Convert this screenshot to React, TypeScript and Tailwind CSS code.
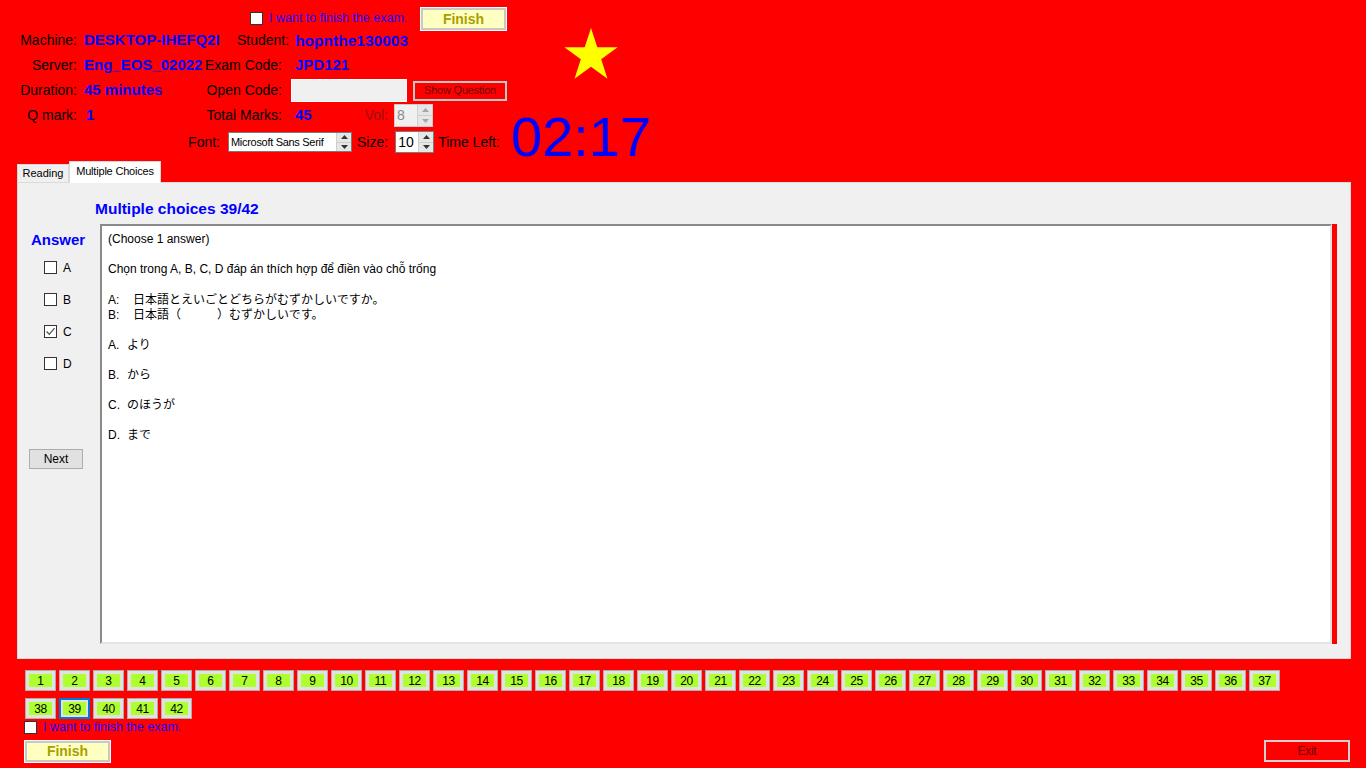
import React from 'react'

const nums = Array.from({ length: 42 }, (_, i) => i + 1)

function Arrows({ disabled }: { disabled?: boolean }) {
  const c = disabled ? '#a6a6a6' : '#333'
  return (
    <div className="flex flex-col w-[15px] h-full border-l border-[#cfcfcf]">
      <div className="flex-1 flex items-center justify-center bg-[#e6e6e6] border-b border-[#cfcfcf]">
        <svg width="7" height="4" viewBox="0 0 7 4"><path d="M0 4 L3.5 0 L7 4 Z" fill={c} /></svg>
      </div>
      <div className="flex-1 flex items-center justify-center bg-[#e6e6e6]">
        <svg width="7" height="4" viewBox="0 0 7 4"><path d="M0 0 L7 0 L3.5 4 Z" fill={c} /></svg>
      </div>
    </div>
  )
}

function Check({ checked }: { checked?: boolean }) {
  return (
    <div className="w-[13px] h-[13px] border border-[#333] bg-white flex items-center justify-center shrink-0">
      {checked && (
        <svg width="11" height="11" viewBox="0 0 11 11">
          <path d="M1.5 5.5 L4.3 8.3 L9.5 2.2" stroke="#555" strokeWidth="1.3" fill="none" />
        </svg>
      )}
    </div>
  )
}

function Star() {
  return (
    <svg width="60" height="60" viewBox="0 0 60 60">
      <polygon
        fill="#ffff00"
        points="30,2 36.29,21.34 56.63,21.35 40.18,33.31 46.46,52.65 30,40.7 13.54,52.65 19.82,33.31 3.37,21.35 23.71,21.34"
      />
    </svg>
  )
}

export default function App() {
  return (
    <div className="w-[1366px] h-[768px] bg-[#ff0000] overflow-hidden font-['Liberation_Sans','Noto_Sans_CJK_JP',sans-serif] text-black">
      {/* header */}
      <div className="flex h-[161px]">
        <div className="w-[510px] flex flex-col">
          <div className="flex items-start h-[28px] pt-[7px]">
            <div className="w-[250px]" />
            <div className="mt-[5px]"><Check /></div>
            <span className="w-[157px] pl-[6px] mt-[4px] text-[12.5px] leading-[15px] text-[#1800ff] whitespace-nowrap">I want to finish the exam.</span>
            <button className="w-[87px] h-[24px] border border-white bg-[#c8c8c8] p-[2px] shrink-0">
              <div className="w-full h-full bg-[#ffffc0] flex items-center justify-center text-[14px] font-bold text-[#a6a000]">Finish</div>
            </button>
          </div>

          <div className="flex items-center h-[25px] text-[14px] whitespace-nowrap">
            <span className="w-[77px] text-right">Machine:</span>
            <span className="w-[153px] ml-[7px] text-[15px] font-bold text-[#0000ff]">DESKTOP-IHEFQ2I</span>
            <span>Student:</span>
            <span className="ml-[6px] text-[15.5px] font-bold text-[#0000ff]">hopnthe130003</span>
          </div>

          <div className="flex items-center h-[25px] text-[14px] whitespace-nowrap">
            <span className="w-[77px] text-right">Server:</span>
            <span className="w-[124px] ml-[7px] text-[15px] font-bold text-[#0000ff]">Eng_EOS_02022</span>
            <span className="w-[74px] flex justify-end">Exam Code:</span>
            <span className="ml-[13px] text-[15px] font-bold text-[#0000ff]">JPD121</span>
          </div>

          <div className="flex items-center h-[25px] text-[14px] whitespace-nowrap">
            <span className="w-[77px] text-right">Duration:</span>
            <span className="w-[124px] ml-[7px] text-[15px] font-bold text-[#0000ff]">45 minutes</span>
            <span className="w-[74px] flex justify-end">Open Code:</span>
            <div className="ml-[9px] w-[116px] h-[23px] border border-white bg-[#f0f0f0]" />
            <button className="ml-[6px] w-[94px] h-[20px] border-2 border-[#c8c8c8] bg-[#ff0000] text-[11px] text-[#6a0000] tracking-[-0.2px] flex items-center justify-center">Show Question</button>
          </div>

          <div className="flex items-center h-[25px] text-[14px] whitespace-nowrap">
            <span className="w-[77px] text-right">Q mark:</span>
            <span className="w-[116px] ml-[9px] text-[15px] font-bold text-[#0000ff]">1</span>
            <span className="w-[80px] flex justify-end">Total Marks:</span>
            <span className="w-[68px] ml-[13px] text-[15px] font-bold text-[#0000ff]">45</span>
            <span className="w-[25px] flex justify-end text-[#9a1010]">Vol:</span>
            <div className="ml-[6px] w-[39px] h-[23px] border border-[#cccccc] bg-[#f0f0f0] flex">
              <span className="flex-1 pl-[2px] text-[14px] leading-[21px] text-[#8a8a8a]">8</span>
              <Arrows disabled />
            </div>
          </div>

          <div className="flex items-center h-[28px] text-[14px] whitespace-nowrap">
            <span className="w-[220px] flex justify-end">Font:</span>
            <div className="ml-[8px] w-[124px] h-[20px] border border-[#7a7a7a] bg-white flex">
              <span className="flex-1 pl-[2px] text-[11px] leading-[18px] tracking-[-0.3px]">Microsoft Sans Serif</span>
              <Arrows />
            </div>
            <span className="ml-[5px]">Size:</span>
            <div className="ml-[7px] w-[39px] h-[22px] border border-[#7a7a7a] bg-white flex">
              <span className="flex-1 pl-[2px] text-[14px] leading-[20px]">10</span>
              <Arrows />
            </div>
            <span className="ml-[4px]">Time Left:</span>
          </div>
        </div>

        <div className="flex flex-col">
          <div className="ml-[51px] mt-[26px]"><Star /></div>
          <div className="ml-[1px] mt-[23px] text-[56px] leading-[56px] text-[#0000ff]">02:17</div>
        </div>
      </div>

      {/* tabs */}
      <div className="flex items-end h-[21px] pl-[17px]">
        <div className="w-[52px] h-[18px] border border-b-0 border-[#d9d9d9] bg-[#f0f0f0] text-[11px] leading-[17px] text-center">Reading</div>
        <div className="w-[92px] h-[22px] -mb-px relative border border-b-0 border-[#d9d9d9] bg-white text-[11px] leading-[19px] text-center tracking-[-0.2px]">Multiple Choices</div>
      </div>

      {/* panel */}
      <div className="ml-[17px] w-[1334px] h-[477px] border border-[#dadada] bg-[#f0f0f0] flex flex-col">
        <div className="h-[41px] pt-[17px] pl-[77px] text-[15.5px] leading-[18px] font-bold text-[#0000ff]">Multiple choices 39/42</div>
        <div className="flex h-[420px]">
          <div className="w-[82px] flex flex-col">
            <div className="mt-[7px] pl-[13px] text-[15px] leading-[18px] font-bold text-[#0000ff]">Answer</div>
            <div className="flex flex-col gap-[19px] mt-[12px] pl-[26px]">
              {['A', 'B', 'C', 'D'].map((l) => (
                <div key={l} className="flex items-center h-[13px]">
                  <Check checked={l === 'C'} />
                  <span className="ml-[6px] text-[12px]">{l}</span>
                </div>
              ))}
            </div>
            <button className="mt-[79px] ml-[11px] w-[54px] h-[20px] border border-[#adadad] bg-[#e1e1e1] text-[12px]">Next</button>
          </div>
          <div className="w-[1232px] h-[420px] border-2 border-t-[#8a8a8a] border-l-[#8a8a8a] border-r-[#e3e3e3] border-b-[#e3e3e3] bg-white pt-[6px] pl-[6px] text-[12px] leading-[15px] whitespace-pre">
            <div>(Choose 1 answer)</div>
            <div>{' '}</div>
            <div>Chọn trong A, B, C, D đáp án thích hợp để điền vào chỗ trống</div>
            <div className="h-[16px]">{' '}</div>
            <div><span className="inline-block w-[25px]">A:</span>日本語とえいごとどちらがむずかしいですか。</div>
            <div><span className="inline-block w-[25px]">B:</span>日本語（　　　）むずかしいです。</div>
            <div>{' '}</div>
            <div><span className="inline-block w-[19px]">A.</span>より</div>
            <div>{' '}</div>
            <div><span className="inline-block w-[19px]">B.</span>から</div>
            <div>{' '}</div>
            <div><span className="inline-block w-[19px]">C.</span>のほうが</div>
            <div>{' '}</div>
            <div><span className="inline-block w-[19px]">D.</span>まで</div>
          </div>
          <div className="w-[5px] h-[420px] bg-[#ff0000]" />
        </div>
      </div>

      {/* question buttons */}
      <div className="mt-[11px] ml-[25px] w-[1270px] flex flex-wrap gap-x-[3px] gap-y-[7px]">
        {nums.map((n) => (
          <div
            key={n}
            className={
              n === 39
                ? 'w-[31px] h-[21px] border-2 border-[#0078d7] bg-[#e1e1e1] p-[2px]'
                : 'w-[31px] h-[21px] border border-[#adadad] bg-[#e1e1e1] p-[3px]'
            }
          >
            <div className="w-full h-full bg-[#adff2f] flex items-center justify-center text-[12px] tracking-[-0.3px]">{n}</div>
          </div>
        ))}
      </div>

      {/* bottom */}
      <div className="flex justify-between items-end pl-[24px] pr-[16px]">
        <div className="flex flex-col">
          <div className="flex items-center h-[15px] mt-[1px]">
            <Check />
            <span className="ml-[6px] text-[12.5px] text-[#1800ff]">I want to finish the exam.</span>
          </div>
          <button className="mt-[5px] w-[87px] h-[23px] border border-white bg-[#c8c8c8] p-[2px]">
            <div className="w-full h-full bg-[#ffffc0] flex items-center justify-center text-[14px] font-bold text-[#a6a000]">Finish</div>
          </button>
        </div>
        <button className="mb-[1px] w-[86px] h-[22px] border-2 border-[#cfcfcf] bg-[#ff0000] text-[12px] text-[#6a0000] tracking-[-0.3px]">Exit</button>
      </div>
    </div>
  )
}
